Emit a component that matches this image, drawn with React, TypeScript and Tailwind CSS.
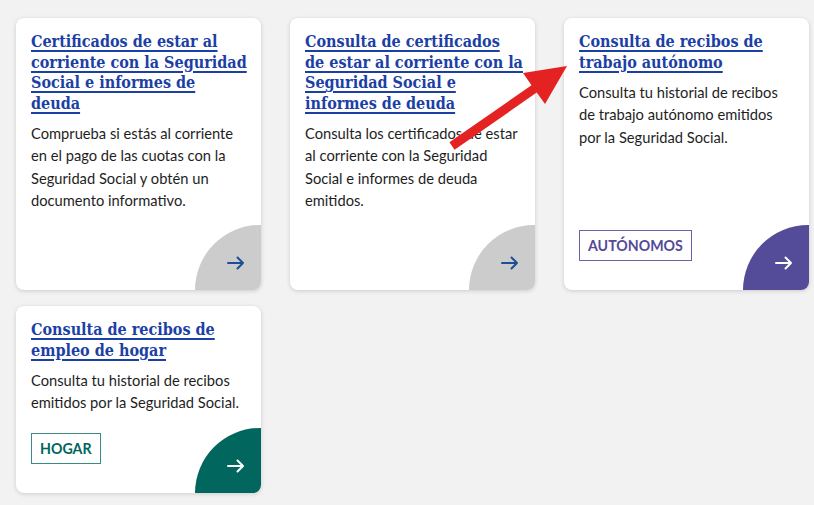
import React from "react";

type Card = {
  title: string;
  body: string;
  badge?: { label: string; cls: string };
  circle: string;
  arrow: string;
};

const cards: Card[] = [
  {
    title: "Certificados de estar al corriente con la Seguridad Social e informes de deuda",
    body: "Comprueba si estás al corriente en el pago de las cuotas con la Seguridad Social y obtén un documento informativo.",
    circle: "bg-[#cccccc]",
    arrow: "#1f4e96",
  },
  {
    title: "Consulta de certificados de estar al corriente con la Seguridad Social e informes de deuda",
    body: "Consulta los certificados de estar al corriente con la Seguridad Social e informes de deuda emitidos.",
    circle: "bg-[#cccccc]",
    arrow: "#1f4e96",
  },
  {
    title: "Consulta de recibos de trabajo autónomo",
    body: "Consulta tu historial de recibos de trabajo autónomo emitidos por la Seguridad Social.",
    badge: { label: "AUTÓNOMOS", cls: "border-[#6c62a8] text-[#544a98]" },
    circle: "bg-[#554c99]",
    arrow: "#ffffff",
  },
  {
    title: "Consulta de recibos de empleo de hogar",
    body: "Consulta tu historial de recibos emitidos por la Seguridad Social.",
    badge: { label: "HOGAR", cls: "border-[#3a8a82] text-[#00665d]" },
    circle: "bg-[#00665e]",
    arrow: "#ffffff",
  },
];

function Arrow({ color }: { color: string }) {
  return (
    <svg width="18" height="14" viewBox="0 0 18 14" fill="none">
      <path d="M1 7h15M10.5 1.5L16 7l-5.5 5.5" stroke={color} strokeWidth="2" strokeLinecap="round" strokeLinejoin="round" />
    </svg>
  );
}

function CardView({ c }: { c: Card }) {
  return (
    <div className="flex flex-col overflow-hidden rounded-lg bg-white shadow-[0_1px_4px_rgba(0,0,0,0.16)] pl-[15px] pt-[14px]">
      <a
        href="#"
        className="pr-[12px] text-[16px] leading-[20.5px] font-bold text-[#1c3fa6] underline decoration-[1.5px] underline-offset-[3px]"
        style={{ fontFamily: '"DejaVu Serif Condensed", "DejaVu Serif", serif', fontStretch: "condensed" }}
      >
        {c.title}
      </a>
      <p
        className="mt-[8px] pr-[12px] text-[14.7px] leading-[22.3px] text-[#1e1e1e]"
        style={{ fontFamily: 'Lato, "Noto Sans", sans-serif' }}
      >
        {c.body}
      </p>
      <div className="mt-auto pt-[14px]">
        <div className="flex h-[65px] items-start justify-between">
          {c.badge ? (
            <span
              className={`mt-[5px] flex h-[31px] items-center border px-[8px] text-[14.2px] font-bold ${c.badge.cls}`}
              style={{ fontFamily: 'Lato, "Noto Sans", sans-serif' }}
            >
              {c.badge.label}
            </span>
          ) : (
            <span />
          )}
          <div className={`flex h-[65px] w-[66px] items-center justify-center rounded-tl-full pl-[16px] pt-[11px] ${c.circle}`}>
            <Arrow color={c.arrow} />
          </div>
        </div>
      </div>
    </div>
  );
}

export default function App() {
  return (
    <div className="relative min-h-[505px] w-[814px] bg-[#f2f2f2] pl-[16px] pt-[18px]">
      <div className="grid w-[793px] grid-cols-[245px_245px_245px] gap-x-[29px] gap-y-[16px]">
        {cards.map((c, i) => (
          <CardView key={i} c={c} />
        ))}
      </div>
      <svg className="pointer-events-none absolute left-0 top-0" width="814" height="505">
        <polygon
          points="449.4,142.3 531.5,85.2 523,73 567,66 545,104 536.7,92.6 454.6,149.7"
          fill="#e52222"
        />
      </svg>
    </div>
  );
}
